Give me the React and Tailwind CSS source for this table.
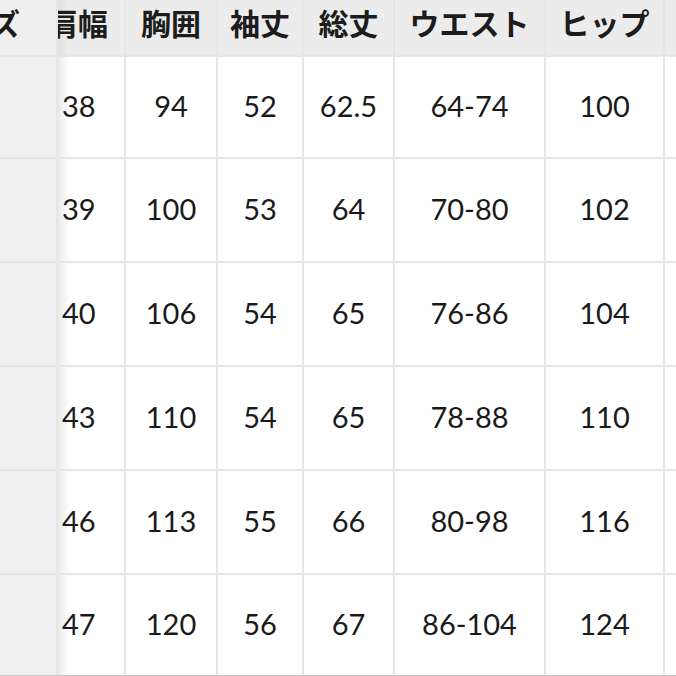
const headers = ["肩幅", "胸囲", "袖丈", "総丈", "ウエスト", "ヒップ"];

const rows = [
  ["38", "94", "52", "62.5", "64-74", "100"],
  ["39", "100", "53", "64", "70-80", "102"],
  ["40", "106", "54", "65", "76-86", "104"],
  ["43", "110", "54", "65", "78-88", "110"],
  ["46", "113", "55", "66", "80-98", "116"],
  ["47", "120", "56", "67", "86-104", "124"],
];

const jp = { fontFamily: '"Noto Sans CJK JP", "Noto Sans", sans-serif' };
const num = { fontFamily: 'Lato, "Noto Sans", sans-serif' };

export default function App() {
  return (
    <div className="w-[676px] h-[676px] overflow-hidden bg-white">
      <div className="grid grid-cols-[56px_66px_90px_84px_89px_149px_117px_20px] grid-rows-[55px_100px_102px_102px_102px_102px_100px] gap-[2px] bg-[#e6e6e6] border-b border-[#c8c8c8] w-[685px]">
        {/* header */}
        <div
          className="bg-[#efefef] overflow-hidden flex justify-end pr-[36px] pt-[4px] text-[30px] leading-[36px] font-bold text-[#1c1c1c] whitespace-nowrap"
          style={jp}
        >
          サイズ
        </div>
        {headers.map((h, i) => (
          <div
            key={h}
            className={
              "bg-[#ececec] overflow-hidden flex pt-[4px] text-[30px] leading-[36px] font-bold text-[#1c1c1c] whitespace-nowrap " +
              (i === 0 ? "justify-start bg-gradient-to-r from-[#e0e0e0] via-[#ececec] via-[10px] to-[#ececec]" : "justify-center")
            }
            style={jp}
          >
            <span className={i === 0 ? "-ml-[10px]" : ""}>{h}</span>
          </div>
        ))}
        <div className="bg-[#ececec]"></div>

        {/* body */}
        {rows.map((r, ri) => (
          <Row key={ri} r={r} />
        ))}
      </div>
    </div>
  );
}

function Row({ r }) {
  return (
    <>
      <div className="bg-[#f0f0f0]"></div>
      {r.map((v, i) => (
        <div
          key={i}
          className={
            "flex items-center pb-[4px] text-[29px] leading-none text-[#1a1a1a] " +
            (i === 0
              ? "justify-start pl-[4px] bg-gradient-to-r from-[#eaeaea] via-white via-[12px] to-white"
              : "justify-center bg-white")
          }
          style={num}
        >
          {v}
        </div>
      ))}
      <div className="bg-white"></div>
    </>
  );
}
